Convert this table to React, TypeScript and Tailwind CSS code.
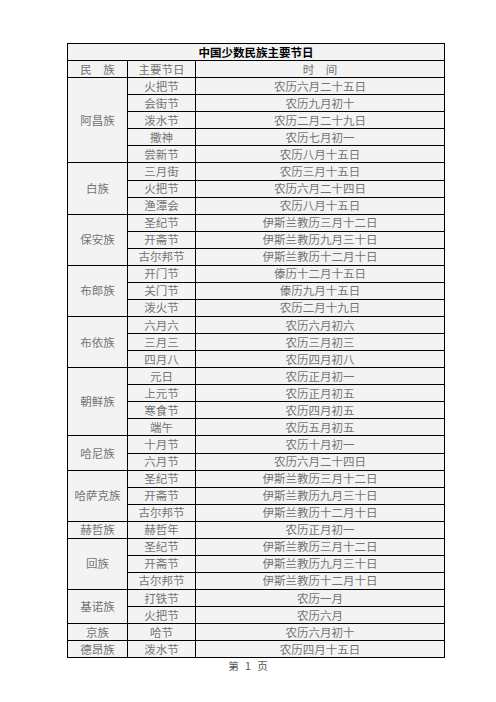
const groups: { name: string; rows: [string, string][] }[] = [
  {
    name: "阿昌族",
    rows: [
      ["火把节", "农历六月二十五日"],
      ["会街节", "农历九月初十"],
      ["泼水节", "农历二月二十九日"],
      ["撒神", "农历七月初一"],
      ["尝新节", "农历八月十五日"],
    ],
  },
  {
    name: "白族",
    rows: [
      ["三月街", "农历三月十五日"],
      ["火把节", "农历六月二十四日"],
      ["渔潭会", "农历八月十五日"],
    ],
  },
  {
    name: "保安族",
    rows: [
      ["圣纪节", "伊斯兰教历三月十二日"],
      ["开斋节", "伊斯兰教历九月三十日"],
      ["古尔邦节", "伊斯兰教历十二月十日"],
    ],
  },
  {
    name: "布郎族",
    rows: [
      ["开门节", "傣历十二月十五日"],
      ["关门节", "傣历九月十五日"],
      ["泼火节", "农历二月十九日"],
    ],
  },
  {
    name: "布依族",
    rows: [
      ["六月六", "农历六月初六"],
      ["三月三", "农历三月初三"],
      ["四月八", "农历四月初八"],
    ],
  },
  {
    name: "朝鲜族",
    rows: [
      ["元日", "农历正月初一"],
      ["上元节", "农历正月初五"],
      ["寒食节", "农历四月初五"],
      ["端午", "农历五月初五"],
    ],
  },
  {
    name: "哈尼族",
    rows: [
      ["十月节", "农历十月初一"],
      ["六月节", "农历六月二十四日"],
    ],
  },
  {
    name: "哈萨克族",
    rows: [
      ["圣纪节", "伊斯兰教历三月十二日"],
      ["开斋节", "伊斯兰教历九月三十日"],
      ["古尔邦节", "伊斯兰教历十二月十日"],
    ],
  },
  { name: "赫哲族", rows: [["赫哲年", "农历正月初一"]] },
  {
    name: "回族",
    rows: [
      ["圣纪节", "伊斯兰教历三月十二日"],
      ["开斋节", "伊斯兰教历九月三十日"],
      ["古尔邦节", "伊斯兰教历十二月十日"],
    ],
  },
  {
    name: "基诺族",
    rows: [
      ["打铁节", "农历一月"],
      ["火把节", "农历六月"],
    ],
  },
  { name: "京族", rows: [["哈节", "农历六月初十"]] },
  { name: "德昂族", rows: [["泼水节", "农历四月十五日"]] },
];

const cell = "border border-black p-0 h-[17.07px] text-center align-middle leading-[15px]";

export default function App() {
  return (
    <div
      className="w-[496px] h-[702px] bg-white pt-[43px] pl-[67px]"
      style={{ fontFamily: '"Noto Sans CJK SC", "Noto Sans", sans-serif' }}
    >
      <table className="w-[378px] table-fixed border-collapse bg-[#f3f3f3] text-[11.5px] text-[#747474]">
        <colgroup>
          <col className="w-[60px]" />
          <col className="w-[68px]" />
          <col />
        </colgroup>
        <tbody>
          <tr>
            <td colSpan={3} className={`${cell} font-bold text-black`}>
              中国少数民族主要节日
            </td>
          </tr>
          <tr>
            <td className={cell}>民　族</td>
            <td className={cell}>主要节日</td>
            <td className={cell}>时　间</td>
          </tr>
          {groups.map((g) =>
            g.rows.map(([fest, date], i) => (
              <tr key={g.name + fest}>
                {i === 0 && (
                  <td rowSpan={g.rows.length} className={cell}>
                    {g.name}
                  </td>
                )}
                <td className={cell}>{fest}</td>
                <td className={cell}>{date}</td>
              </tr>
            ))
          )}
        </tbody>
      </table>
      <div className="w-[362px] mt-[2px] text-center text-[10.5px] leading-[12px] text-[#555] [word-spacing:4px]">
        第 1 页
      </div>
    </div>
  );
}
